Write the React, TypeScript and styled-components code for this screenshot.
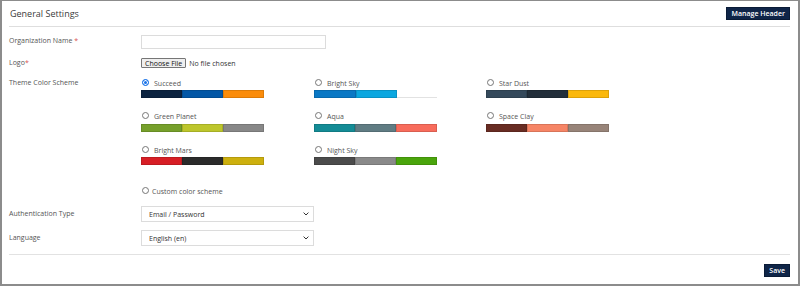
import React from "react";
import styled, { createGlobalStyle } from "styled-components";

const Global = createGlobalStyle`
  html, body { margin: 0; padding: 0; background: #fff; }
  body { font-family: "Open Sans", "Noto Sans", Arial, sans-serif; color: #555; }
  * { box-sizing: border-box; }
`;

const Frame = styled.div`
  width: 800px;
  height: 286px;
  border: 2px solid #8c8c8c;
  border-top-width: 1px;
  background: #fff;
  display: flex;
  flex-direction: column;
  padding: 0 8px 0 7px;
`;

const Header = styled.div`
  height: 26px;
  display: flex;
  align-items: center;
  justify-content: space-between;
  border-bottom: 1px solid #dedede;
`;

const Title = styled.h1`
  margin: 0;
  font-size: 9px;
  font-weight: 400;
  color: #3a3a3a;
  line-height: 1;
  padding-left: 1px;
`;

const DarkButton = styled.button`
  background: #0f2548;
  color: #fff;
  border: 1px solid #0a1b36;
  font-family: "Open Sans", Arial, sans-serif;
  font-weight: 600;
  font-size: 7px;
  height: 13px;
  padding: 0 4px;
  line-height: 1;
  cursor: pointer;
`;

const Body = styled.div`
  padding-top: 8px;
  display: flex;
  flex-direction: column;
`;

const Row = styled.div<{ $mt?: number }>`
  display: grid;
  grid-template-columns: 132px 1fr;
  align-items: center;
  margin-top: ${(p) => p.$mt ?? 0}px;
`;

const Label = styled.label<{ $center?: boolean }>`
  font-size: 7px;
  color: #555;
  align-self: ${(p) => (p.$center ? "center" : "start")};
  line-height: 12px;
`;

const Req = styled.span`
  color: #d9534f;
`;

const TextInput = styled.input`
  width: 185px;
  height: 14px;
  border: 1px solid #dcdcdc;
  padding: 0 4px;
  font-size: 7px;
  outline: none;
`;

const FileWrap = styled.div`
  display: flex;
  align-items: center;
  gap: 3px;
  font-size: 7px;
  color: #333;
`;

const FileButton = styled.button`
  height: 10px;
  padding: 0 3px;
  border: 1px solid #767676;
  background: #efefef;
  border-radius: 1px;
  font-family: "Open Sans", Arial, sans-serif;
  font-size: 7px;
  color: #111;
  line-height: 1;
`;

const SchemeGrid = styled.div`
  display: grid;
  grid-template-columns: 173px 172px 172px;
  row-gap: 12.5px;
`;

const Option = styled.div`
  display: flex;
  flex-direction: column;
`;

const RadioLine = styled.div`
  display: flex;
  align-items: center;
  height: 12px;
  gap: 5px;
  font-size: 7px;
  color: #555;
  padding-left: 1px;
`;

const Radio = styled.span<{ $checked?: boolean }>`
  width: 7px;
  height: 7px;
  border-radius: 50%;
  border: 1px solid ${(p) => (p.$checked ? "#1a73e8" : "#767676")};
  background: ${(p) => (p.$checked ? "#1a73e8" : "#fff")};
  box-shadow: ${(p) => (p.$checked ? "inset 0 0 0 1px #fff" : "none")};
  flex: none;
  margin-top: -2px;
`;

const Swatch = styled.div`
  display: flex;
  width: 123px;
  height: 8px;
  margin-top: 1px;
`;

const Seg = styled.span<{ $c: string; $empty?: boolean }>`
  flex: 1;
  background: ${(p) => (p.$empty ? "transparent" : p.$c)};
  border: ${(p) => (p.$empty ? "none" : "1px solid rgba(0,0,0,0.12)")};
  border-bottom: 1px solid ${(p) => (p.$empty ? "#e2e2e2" : "rgba(0,0,0,0.12)")};
`;

const CustomLine = styled(RadioLine)`
  gap: 3px;
  margin-top: 20px;
`;

const SelectBox = styled.div`
  width: 173px;
  height: 16px;
  border: 1px solid #dcdcdc;
  display: flex;
  align-items: center;
  padding: 0 4px 0 7px;
  font-size: 7px;
  color: #333;
`;

const SelectText = styled.span`
  flex: 1;
`;

const Divider = styled.div`
  border-top: 1px solid #e2e2e2;
  margin-top: 8px;
`;

const Footer = styled.div`
  display: flex;
  justify-content: flex-end;
  margin-top: 9px;
`;

type Scheme = { name: string; colors: string[]; checked?: boolean };

const schemes: Scheme[] = [
  { name: "Succeed", colors: ["#0c2340", "#0357a6", "#fb8c0a"], checked: true },
  { name: "Bright Sky", colors: ["#0a78c5", "#0ba7e0", ""] },
  { name: "Star Dust", colors: ["#34495b", "#222e3a", "#fbb80c"] },
  { name: "Green Planet", colors: ["#76a02b", "#bdc62c", "#888888"] },
  { name: "Aqua", colors: ["#148c96", "#607c83", "#f86c5c"] },
  { name: "Space Clay", colors: ["#682c23", "#f68566", "#988479"] },
  { name: "Bright Mars", colors: ["#d71e25", "#2b2b2b", "#cdb00e"] },
  { name: "Night Sky", colors: ["#4b4b4b", "#8a8a8a", "#4aa50c"] },
];

const Chevron = () => (
  <svg width="6" height="4" viewBox="0 0 6 4">
    <path d="M0.6 0.6 L3 3 L5.4 0.6" fill="none" stroke="#333" strokeWidth="1" />
  </svg>
);

export default function App() {
  return (
    <>
      <Global />
      <Frame>
        <Header>
          <Title>General Settings</Title>
          <DarkButton>Manage Header</DarkButton>
        </Header>
        <Body>
          <Row>
            <Label>
              Organization Name <Req>*</Req>
            </Label>
            <TextInput />
          </Row>
          <Row $mt={8}>
            <Label>
              Logo<Req>*</Req>
            </Label>
            <FileWrap>
              <FileButton>Choose File</FileButton>
              <span>No file chosen</span>
            </FileWrap>
          </Row>
          <Row $mt={8}>
            <Label>Theme Color Scheme</Label>
            <div>
              <SchemeGrid>
                {schemes.map((s) => (
                  <Option key={s.name}>
                    <RadioLine>
                      <Radio $checked={s.checked} />
                      {s.name}
                    </RadioLine>
                    <Swatch>
                      {s.colors.map((c, i) => (
                        <Seg key={i} $c={c} $empty={!c} />
                      ))}
                    </Swatch>
                  </Option>
                ))}
              </SchemeGrid>
              <CustomLine>
                <Radio />
                Custom color scheme
              </CustomLine>
            </div>
          </Row>
          <Row $mt={9}>
            <Label $center>Authentication Type</Label>
            <SelectBox>
              <SelectText>Email / Password</SelectText>
              <Chevron />
            </SelectBox>
          </Row>
          <Row $mt={8}>
            <Label $center>Language</Label>
            <SelectBox>
              <SelectText>English (en)</SelectText>
              <Chevron />
            </SelectBox>
          </Row>
          <Divider />
          <Footer>
            <DarkButton>Save</DarkButton>
          </Footer>
        </Body>
      </Frame>
    </>
  );
}
